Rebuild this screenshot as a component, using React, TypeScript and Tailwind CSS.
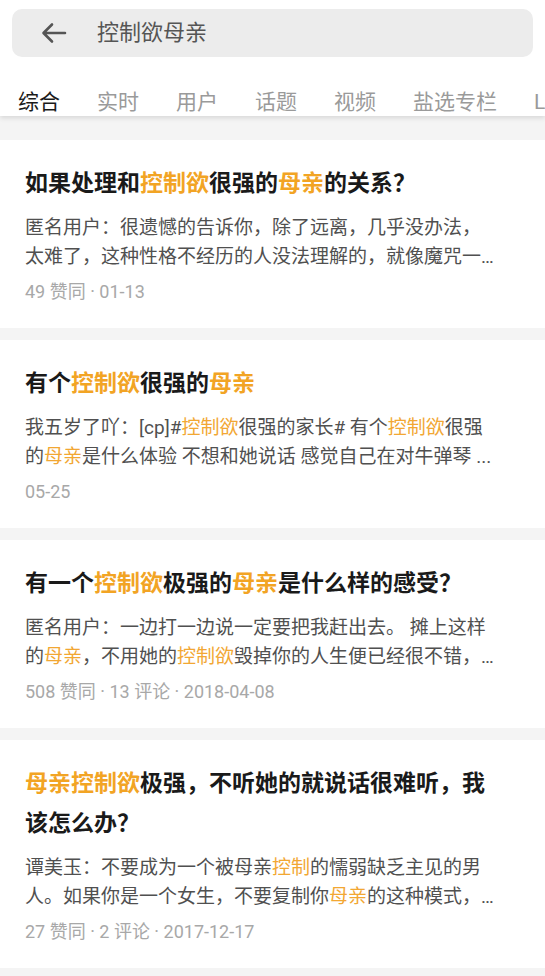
import React from "react";

type Seg = string | { h: string };

const H = (h: string): Seg => ({ h });

function Rich({ segs, hl }: { segs: Seg[]; hl: string }) {
  return (
    <>
      {segs.map((s, i) =>
        typeof s === "string" ? (
          <React.Fragment key={i}>{s}</React.Fragment>
        ) : (
          <span key={i} className={hl}>
            {s.h}
          </span>
        )
      )}
    </>
  );
}

type Card = {
  title: Seg[][];
  body: Seg[][];
  meta: string;
};

const cards: Card[] = [
  {
    title: [["如果处理和", H("控制欲"), "很强的", H("母亲"), "的关系？"]],
    body: [
      ["匿名用户：很遗憾的告诉你，除了远离，几乎没办法，"],
      ["太难了，这种性格不经历的人没法理解的，就像魔咒一…"],
    ],
    meta: "49 赞同 · 01-13",
  },
  {
    title: [["有个", H("控制欲"), "很强的", H("母亲")]],
    body: [
      ["我五岁了吖：[cp]#", H("控制欲"), "很强的家长# 有个", H("控制欲"), "很强"],
      ["的", H("母亲"), "是什么体验 不想和她说话 感觉自己在对牛弹琴 ..."],
    ],
    meta: "05-25",
  },
  {
    title: [["有一个", H("控制欲"), "极强的", H("母亲"), "是什么样的感受？"]],
    body: [
      ["匿名用户：一边打一边说一定要把我赶出去。 摊上这样"],
      ["的", H("母亲"), "，不用她的", H("控制欲"), "毁掉你的人生便已经很不错，…"],
    ],
    meta: "508 赞同 · 13 评论 · 2018-04-08",
  },
  {
    title: [
      [H("母亲控制欲"), "极强，不听她的就说话很难听，我"],
      ["该怎么办？"],
    ],
    body: [
      ["谭美玉：不要成为一个被母亲", H("控制"), "的懦弱缺乏主见的男"],
      ["人。如果你是一个女生，不要复制你", H("母亲"), "的这种模式，…"],
    ],
    meta: "27 赞同 · 2 评论 · 2017-12-17",
  },
];

const tabs = ["综合", "实时", "用户", "话题", "视频", "盐选专栏", "Live"];

export default function App() {
  return (
    <div
      className="w-[545px] h-[976px] overflow-hidden bg-[#f4f4f4]"
      style={{ fontFamily: "Roboto, 'Noto Sans CJK SC', sans-serif" }}
    >
      <header className="bg-white pt-[9px] shadow-[0_2px_5px_rgba(0,0,0,0.12)] relative z-10">
        <div className="mx-[12px] h-[48px] rounded-[10px] bg-[#ececec] flex items-center">
          <svg
            width="26"
            height="22"
            viewBox="0 0 26 22"
            className="ml-[29px]"
            fill="none"
            stroke="#555"
            strokeWidth="2.6"
            strokeLinecap="round"
            strokeLinejoin="round"
          >
            <path d="M24 11H3M11 2.5L2.5 11L11 19.5" />
          </svg>
          <span className="ml-[30px] text-[22px] leading-[28px] text-[#555]">控制欲母亲</span>
        </div>
        <nav className="mt-[31px] mb-[16px] h-[28px] pl-[18px] flex gap-[37px] whitespace-nowrap overflow-hidden">
          {tabs.map((t, i) => (
            <span
              key={t}
              className={
                "text-[21px] leading-[28px] " + (i === 0 ? "text-[#1a1a1a]" : "text-[#9a9a9a]")
              }
            >
              {t}
            </span>
          ))}
        </nav>
      </header>

      <main className="pt-[8px] flex flex-col gap-[12px]">
        {cards.map((c, i) => (
          <article key={i} className="bg-white pl-[25px] pr-[20px] pt-[24px] pb-[24px]">
            <h2 className="text-[23px] leading-[40px] font-bold text-[#1a1a1a]">
              {c.title.map((line, j) => (
                <div key={j} className="whitespace-nowrap">
                  <Rich segs={line} hl="text-[#f2a424]" />
                </div>
              ))}
            </h2>
            <div className="mt-[9px] text-[19px] leading-[29px] text-[#505050]">
              {c.body.map((line, j) => (
                <div key={j} className="whitespace-nowrap">
                  <Rich segs={line} hl="text-[#f2a733]" />
                </div>
              ))}
            </div>
            <div className="mt-[9px] text-[18px] leading-[24px] text-[#a8a8a8]">{c.meta}</div>
          </article>
        ))}
      </main>
    </div>
  );
}
